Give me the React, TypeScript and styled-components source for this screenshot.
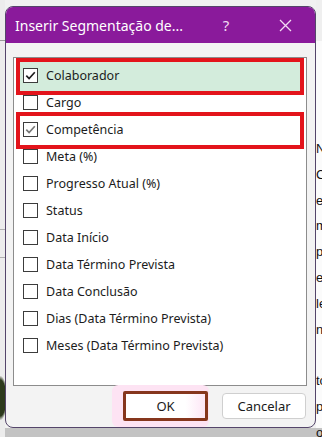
import React from 'react';
import styled, { createGlobalStyle } from 'styled-components';

const GlobalStyle = createGlobalStyle`
  html, body {
    margin: 0;
    padding: 0;
  }
  body {
    font-family: 'Noto Sans', 'Open Sans', sans-serif;
    background: #f0f0f0;
  }
`;

const Page = styled.div`
  width: 322px;
  height: 437px;
  overflow: hidden;
  display: flex;
  align-items: flex-start;
  background: linear-gradient(#f1f1f1 0 428px, #c3c3c3 428px);
`;

const LeftEdge = styled.div`
  width: 5px;
  height: 437px;
  flex-shrink: 0;
  background:
    radial-gradient(ellipse 10px 30px at 0 398px, #2d3a1c 0 60%, transparent 75%),
    linear-gradient(transparent 0 40px, #9a9a9a 40px 41px, transparent 41px 229px, #b0b0b0 229px 230px, transparent 230px 257px, #b0b0b0 257px 258px, transparent 258px),
    #ececec;
`;

const RightEdge = styled.div`
  flex: 1;
  height: 437px;
  overflow: hidden;
  white-space: nowrap;
  background: linear-gradient(#efefef 0 41px, #fbfbfb 41px 428px, #c3c3c3 428px);
  padding-top: 136px;
  box-sizing: border-box;
  font-family: 'Liberation Sans', Arial, sans-serif;
  font-size: 13px;
  line-height: 25.8px;
  color: #111;
`;

const Dialog = styled.div`
  margin-top: 6px;
  width: 311px;
  height: 422px;
  flex-shrink: 0;
  box-sizing: border-box;
  border: 1px solid #54456a;
  border-radius: 8px;
  overflow: hidden;
  background: #f3f3f3;
  display: flex;
  flex-direction: column;
`;

const TitleBar = styled.div`
  height: 36px;
  flex-shrink: 0;
  background: #8a1a9b;
  display: flex;
  align-items: center;
  padding: 0 7px 0 9px;
  color: #fff;
`;

const Title = styled.div`
  flex: 1;
  font-size: 14px;
  white-space: nowrap;
`;

const TitleButton = styled.div<{ $w: number }>`
  width: ${(p) => p.$w}px;
  height: 36px;
  display: flex;
  align-items: center;
  justify-content: center;
  font-size: 15px;
  color: #f3dcf3;
`;

const Body = styled.div`
  flex: 1;
  display: flex;
  flex-direction: column;
  padding: 14px 8px 0 7px;
`;

const ListBox = styled.div`
  height: 329px;
  box-sizing: border-box;
  border: 1px solid #8c8c8c;
  background: #fff;
  padding-top: 4px;
`;

const Row = styled.div<{ $marked?: boolean; $highlight?: boolean }>`
  position: relative;
  isolation: isolate;
  height: 27px;
  display: flex;
  align-items: center;
  gap: 8px;
  padding-left: 9px;
  font-size: 12.5px;
  color: #1c1c1c;

  &::before {
    content: '';
    display: ${(p) => (p.$marked ? 'block' : 'none')};
    position: absolute;
    top: -4px;
    bottom: -6px;
    left: 2px;
    right: 2px;
    border: 4px solid #e3141b;
    background: ${(p) => (p.$highlight ? '#d3ecdc' : 'transparent')};
    z-index: -1;
  }
`;

const Box = styled.span`
  width: 15px;
  height: 15px;
  box-sizing: border-box;
  border: 1px solid #3c3c3c;
  background: #fff;
  display: flex;
  align-items: center;
  justify-content: center;
  flex-shrink: 0;
`;

const ButtonRow = styled.div`
  display: flex;
  justify-content: flex-end;
  align-items: center;
  gap: 14px;
  margin-top: 5px;
  padding-right: 1px;
`;

const Button = styled.button<{ $primary?: boolean }>`
  font-family: 'Noto Sans', 'Open Sans', sans-serif;
  font-size: 13px;
  color: #1a1a1a;
  background: ${(p) => (p.$primary ? 'linear-gradient(90deg, #fff 0 75%, #fde6f6 100%)' : '#fff')};
  border: ${(p) => (p.$primary ? '3px solid #86361d' : '1px solid #cfcfcf')};
  border-radius: ${(p) => (p.$primary ? '2px' : '4px')};
  width: ${(p) => (p.$primary ? 85 : 84)}px;
  height: ${(p) => (p.$primary ? 30 : 26)}px;
  padding: 0;
  box-shadow: ${(p) => (p.$primary ? '-5px 0 0 6px #fde3f3' : 'none')};
`;

function Check({ color }: { color: string }) {
  return (
    <svg width="13" height="13" viewBox="0 0 13 13">
      <path d="M2.3 6.6 L5.1 9.5 L10.8 3.2" fill="none" stroke={color} strokeWidth="1.7" />
    </svg>
  );
}

type Item = { label: string; checked?: boolean; tone?: string; marked?: boolean; highlight?: boolean };

const items: Item[] = [
  { label: 'Colaborador', checked: true, tone: '#1e1e1e', marked: true, highlight: true },
  { label: 'Cargo' },
  { label: 'Competência', checked: true, tone: '#777', marked: true },
  { label: 'Meta (%)' },
  { label: 'Progresso Atual (%)' },
  { label: 'Status' },
  { label: 'Data Início' },
  { label: 'Data Término Prevista' },
  { label: 'Data Conclusão' },
  { label: 'Dias (Data Término Prevista)' },
  { label: 'Meses (Data Término Prevista)' },
];

const edgeLines = ['Ne', 'Co', 'e m', 'm', 'p', 'e', 'le', 'n', '', 'to', 'p', 'o'];

export default function App() {
  return (
    <>
      <GlobalStyle />
      <Page>
        <LeftEdge />
        <Dialog>
          <TitleBar>
            <Title>Inserir Segmentação de...</Title>
            <TitleButton $w={40}>?</TitleButton>
            <TitleButton $w={16} />
            <TitleButton $w={46}>
              <svg width="13" height="13" viewBox="0 0 13 13">
                <path d="M1 1 L12 12 M12 1 L1 12" stroke="#f3dcf3" strokeWidth="1.3" />
              </svg>
            </TitleButton>
          </TitleBar>
          <Body>
            <ListBox>
              {items.map((it) => (
                <Row key={it.label} $marked={it.marked} $highlight={it.highlight}>
                  <Box>{it.checked && <Check color={it.tone || '#222'} />}</Box>
                  <span>{it.label}</span>
                </Row>
              ))}
            </ListBox>
            <ButtonRow>
              <Button $primary>OK</Button>
              <Button>Cancelar</Button>
            </ButtonRow>
          </Body>
        </Dialog>
        <RightEdge>
          {edgeLines.map((l, i) => (
            <div key={i}>{l || '\u00a0'}</div>
          ))}
        </RightEdge>
      </Page>
    </>
  );
}
